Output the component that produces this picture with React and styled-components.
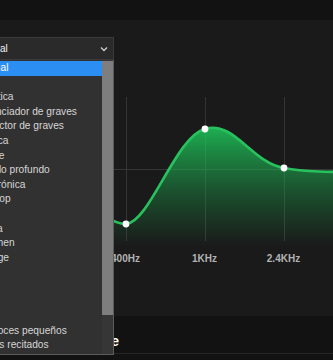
import styled, { createGlobalStyle } from "styled-components"

const Global = createGlobalStyle`
    html, body {
        margin: 0;
        padding: 0;
        background: #121212;
        overflow: hidden;
    }
    * {
        box-sizing: border-box;
    }
`

const Page = styled.div`
    width: 333px;
    height: 360px;
    display: flex;
    flex-direction: column;
    font-family: "Liberation Sans", Arial, sans-serif;
    overflow: hidden;
`
const TopBar = styled.div`
    flex: 0 0 20px;
    background: #121212;
`
const Main = styled.div`
    flex: 0 0 296px;
    background: #1a1a1a;
    padding-top: 17px;
    display: flex;
    flex-direction: column;
`
const SelectWrap = styled.div`
    position: relative;
    margin-left: -31px;
    width: 145px;
    z-index: 2;
`
const SelectBox = styled.div`
    height: 23px;
    display: flex;
    align-items: center;
    justify-content: space-between;
    padding: 0 5px 0 5px;
    background: #2a2a2a;
    border: 1px solid #3a3a3a;
    color: #f2f2f2;
    font-size: 10px;
`
const ListBox = styled.div`
    position: absolute;
    top: 100%;
    left: 0;
    width: 145px;
    height: 295px;
    display: flex;
    background: #313131;
    border: 1px solid #5c5c5c;
    border-left-color: #444;
    border-top: none;
`
const Options = styled.ul`
    flex: 1;
    margin: 0;
    padding: 1px 0 0 0;
    list-style: none;
    overflow: hidden;
`
const Option = styled.li`
    height: 14.6px;
    line-height: 14.6px;
    padding-left: 5px;
    font-size: 10.2px;
    white-space: nowrap;
    color: ${p => (p.$active ? "#ffffff" : "#d6d6d6")};
    background: ${p => (p.$active ? "#2a8ef2" : "transparent")};
`
const Track = styled.div`
    flex: 0 0 11px;
    background: #363636;
    padding-top: 1px;
`
const Thumb = styled.div`
    height: 254px;
    background: #7e7e7e;
`
const ChartBlock = styled.div`
    margin-top: 30px;
    margin-left: -72px;
    width: 474px;
`
const Labels = styled.div`
    display: grid;
    grid-template-columns: repeat(6, 79px);
    margin-top: 3px;
`
const Label = styled.span`
    text-align: center;
    font-size: 10px;
    font-weight: 700;
    line-height: 12px;
    color: #b3b3b3;
`
const BottomBar = styled.div`
    flex: 0 0 38px;
    background: #121212;
    border-bottom: 1px solid #262626;
    display: flex;
    align-items: flex-end;
    padding-bottom: 4px;
`
const HeadingSlot = styled.div`
    width: 119px;
    display: flex;
    justify-content: flex-end;
`
const Heading = styled.h3`
    flex-shrink: 0;
    margin: 0;
    font-size: 14px;
    font-weight: 700;
    color: #ffffff;
    white-space: nowrap;
`

const presets = [
    "Manual",
    "Bajo",
    "Acústica",
    "Potenciador de graves",
    "Reductor de graves",
    "Clásica",
    "Dance",
    "Sonido profundo",
    "Electrónica",
    "Hip-hop",
    "Jazz",
    "Latina",
    "Volumen",
    "Lounge",
    "Pop",
    "R&B",
    "Rock",
    "Soul",
    "Altavoces pequeños",
    "Textos recitados",
]

const bands = ["60Hz", "150Hz", "400Hz", "1KHz", "2.4KHz", "15KHz"]
const xs = [-32, 47, 126, 205, 284, 363]
const points = [[-32, 160], [47, 176], [126, 224], [205, 129], [284, 168], [363, 172]]

const curve =
    "M -32 160 C -5 162 25 170 47 176 " +
    "C 75 182 100 224 126 224 " +
    "C 150 222 176 136 205 129 " +
    "C 234 120 252 163 284 168 " +
    "C 305 172 330 172 363 172"

function Chevron() {
    return (
        <svg width="8" height="6" viewBox="0 0 8 6">
            <polyline points="1,1.5 4,4.5 7,1.5" fill="none" stroke="#cfcfcf" strokeWidth="1.3" />
        </svg>
    )
}

function EqChart() {
    return (
        <ChartBlock>
            <svg width="474" height="160" viewBox="-72 90 474 160" style={{ display: "block" }}>
                <defs>
                    <linearGradient id="eqFill" gradientUnits="userSpaceOnUse" x1="0" y1="126" x2="0" y2="246">
                        <stop offset="0" stopColor="#1ed760" stopOpacity="0.8" />
                        <stop offset="0.55" stopColor="#1db954" stopOpacity="0.34" />
                        <stop offset="1" stopColor="#1db954" stopOpacity="0" />
                    </linearGradient>
                </defs>
                {xs.map(x => (
                    <line key={x} x1={x + 0.5} x2={x + 0.5} y1="97" y2="241" stroke="#343434" strokeWidth="1" />
                ))}
                <line x1="-72" x2="402" y1="169.5" y2="169.5" stroke="#363636" strokeWidth="1" />
                <path d={curve + " L 402 172 L 402 246 L -72 246 Z"} fill="url(#eqFill)" />
                <path d={curve} fill="none" stroke="#27c25e" strokeWidth="2.6" strokeLinecap="round" />
                {points.map(([x, y]) => (
                    <circle key={x} cx={x} cy={y} r="3.4" fill="#ffffff" />
                ))}
            </svg>
            <Labels>
                {bands.map(b => (
                    <Label key={b}>{b}</Label>
                ))}
            </Labels>
        </ChartBlock>
    )
}

export default function App() {
    return (
        <Page>
            <Global />
            <TopBar />
            <Main>
                <SelectWrap>
                    <SelectBox>
                        <span>Manual</span>
                        <Chevron />
                    </SelectBox>
                    <ListBox>
                        <Options>
                            {presets.map((p, i) => (
                                <Option key={p} $active={i === 0}>{p}</Option>
                            ))}
                        </Options>
                        <Track>
                            <Thumb />
                        </Track>
                    </ListBox>
                </SelectWrap>
                <EqChart />
            </Main>
            <BottomBar>
                <HeadingSlot>
                    <Heading>Crossfade</Heading>
                </HeadingSlot>
            </BottomBar>
        </Page>
    )
}
